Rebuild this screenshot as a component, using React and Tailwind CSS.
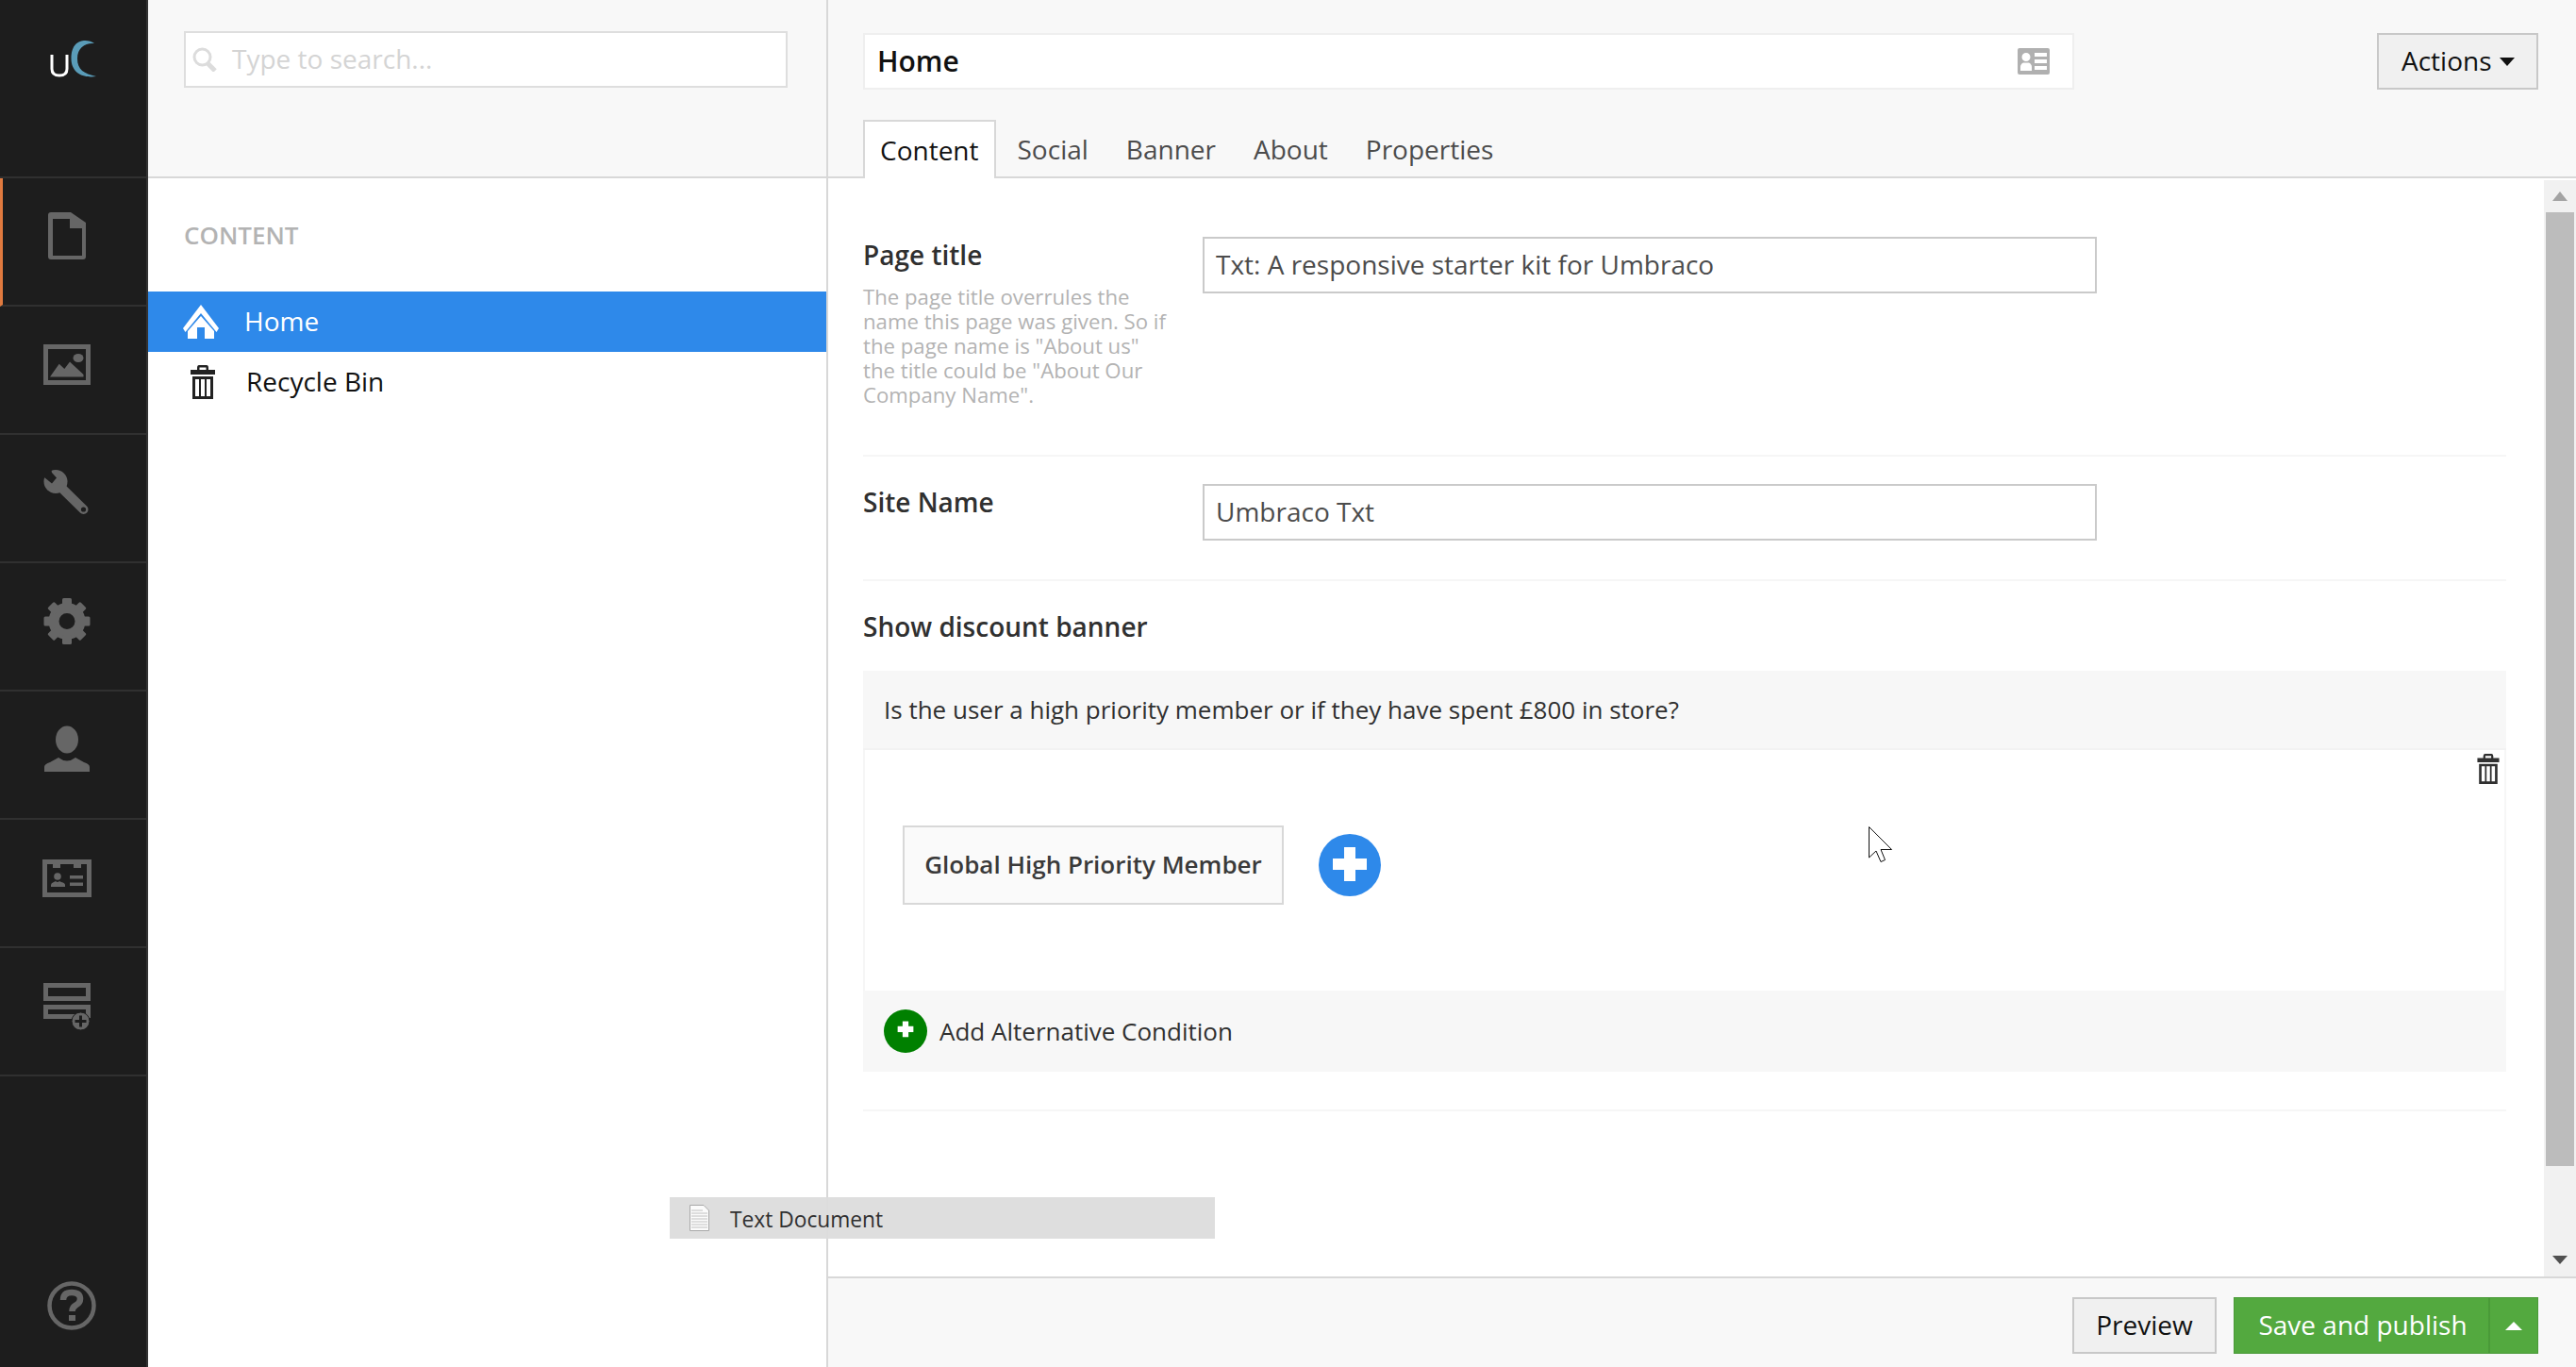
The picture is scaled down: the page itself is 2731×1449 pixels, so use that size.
import React from "react";

const navIconClass = "w-[52px] h-[52px] fill-[#666666]";

function DocIcon() {
  return (
    <svg viewBox="0 0 52 52" className={navIconClass}>
      <path
        fillRule="evenodd"
        d="M9 0H30L46 11V47Q46 50 43 50H9Q6 50 6 47V3Q6 0 9 0ZM11 7V46H42V17H29V7Z"
      />
    </svg>
  );
}

function ImageIcon() {
  return (
    <svg viewBox="0 0 52 52" className={navIconClass}>
      <path fillRule="evenodd" d="M1 4H51V47H1ZM6 9V42H46V9Z" />
      <path d="M8 38.5L17.7 24.7L23.3 30L29 22.4L43.5 36V38.5Z" />
      <ellipse cx="38" cy="18.5" rx="5.5" ry="4.5" />
    </svg>
  );
}

function WrenchIcon() {
  return (
    <svg viewBox="0 0 52 52" className={navIconClass}>
      <circle cx="14" cy="13.5" r="12.5" />
      <line x1="16" y1="16" x2="43.5" y2="43" stroke="#666666" strokeWidth="10" strokeLinecap="round" />
      <polygon points="-2,-1 9,-1 10,4 15,9.5 10,15.5 2,9 -2,9" fill="#1d1d1d" />
      <circle cx="43.5" cy="43" r="2.6" fill="#1d1d1d" />
    </svg>
  );
}

function GearIcon() {
  const angles = [0, 45, 90, 135, 180, 225, 270, 315];
  return (
    <svg viewBox="0 0 52 52" className={navIconClass}>
      <circle cx="26" cy="25.5" r="14" fill="none" stroke="#666666" strokeWidth="11" />
      {angles.map((a) => (
        <rect key={a} x="21" y="1" width="10" height="10" rx="1.5" transform={`rotate(${a} 26 25.5)`} />
      ))}
    </svg>
  );
}

function PersonIcon() {
  return (
    <svg viewBox="0 0 52 52" className={navIconClass}>
      <ellipse cx="26" cy="15" rx="12" ry="14.5" />
      <path d="M2 49V44Q2 41 8 39L17 34Q26 41 35 34L44 39Q50 41 50 44V49Z" />
    </svg>
  );
}

function CardIcon() {
  return (
    <svg viewBox="0 0 52 52" className={navIconClass}>
      <path
        fillRule="evenodd"
        d="M0 6H52V46H0ZM5 11V41H47V11H41V15H33V11H19V15H11V11Z"
      />
      <circle cx="16" cy="24" r="3.8" />
      <path d="M9 35V33Q9 31 12 30L14 29Q16 31 18 29L20 30Q24 31 24 33V35Z" />
      <rect x="29" y="23" width="14" height="3.5" />
      <rect x="29" y="30.5" width="14" height="3.5" />
    </svg>
  );
}

function GridAddIcon() {
  return (
    <svg viewBox="0 0 52 52" className={navIconClass}>
      <path fillRule="evenodd" d="M1 1H51V20H1ZM6 6V15H46V6Z" />
      <path fillRule="evenodd" d="M1 24H51V38H35V39H1ZM6 29V34H46V29Z" />
      <circle cx="40.5" cy="41.5" r="9.5" stroke="#1d1d1d" strokeWidth="1" />
      <path d="M39 35.5H42V40H46.5V43H42V47.5H39V43H34.5V40H39Z" fill="#1d1d1d" />
    </svg>
  );
}

function HelpIcon() {
  return (
    <svg viewBox="0 0 52 52" className="w-[52px] h-[52px]" fill="none" stroke="#666666">
      <circle cx="26" cy="26" r="23.5" strokeWidth="4.5" />
      <path d="M17 20Q17 12 26 12Q35 12 35 19Q35 23 30.5 25.5Q26.5 27.5 26.5 32" strokeWidth="6.5" />
      <rect x="23" y="36" width="7" height="6" fill="#666666" stroke="none" />
    </svg>
  );
}

function TrashIcon({ className }) {
  return (
    <svg viewBox="0 0 26 36" className={className}>
      <path
        fillRule="evenodd"
        d="M9 0H17Q19 0 19 3V5H26V10H0V5H7V3Q7 0 9 0ZM9.5 2.5V5H16.5V2.5Z"
      />
      <path
        fillRule="evenodd"
        d="M2 12H24V36H2ZM5 15V33H9V15ZM11 15V33H15V15ZM17 15V33H21V15Z"
      />
    </svg>
  );
}

function HomeIcon() {
  return (
    <svg viewBox="0 0 38 36" className="w-[38px] h-[36px] fill-white">
      <path d="M19 0L38 25L35.5 29L19 9L2.5 29L0 25Z" />
      <path fillRule="evenodd" d="M19 12L33 28V36H5V28ZM15 24V36H23V24Z" />
    </svg>
  );
}

function SearchIcon() {
  return (
    <svg viewBox="0 0 26 26" className="w-[26px] h-[26px]" fill="none" stroke="#dcdcdc">
      <circle cx="10.5" cy="10.5" r="8.5" strokeWidth="3" />
      <path d="M16 17L24 25" strokeWidth="5" />
    </svg>
  );
}

function PlusCircle({ size, plus, thick, bg, lift }) {
  const a = (66 - plus) / 2;
  const b = (66 - thick) / 2;
  return (
    <svg viewBox="0 0 66 66" className={size}>
      <circle cx="33" cy="33" r="33" fill={bg} />
      <rect x={a} y={b - lift} width={plus} height={thick} fill="#fff" />
      <rect x={b} y={a - lift} width={thick} height={plus} fill="#fff" />
    </svg>
  );
}

const navItems = [
  { id: "content", icon: <DocIcon />, active: true },
  { id: "media", icon: <ImageIcon /> },
  { id: "settings", icon: <WrenchIcon /> },
  { id: "developer", icon: <GearIcon /> },
  { id: "users", icon: <PersonIcon /> },
  { id: "members", icon: <CardIcon /> },
  { id: "forms", icon: <GridAddIcon /> },
];

const tabs = ["Content", "Social", "Banner", "About", "Properties"];

function Sidebar() {
  return (
    <div className="w-[157px] shrink-0 flex flex-col bg-[#1d1d1d] border-r-2 border-[#333333]">
      <div className="h-[189px] border-b-2 border-[#303030] pl-[53px] pt-[42px]">
        <svg viewBox="0 0 50 40" className="w-[50px] h-[40px]" fill="none">
          <path d="M2 16V31Q2 38 10 38Q18 38 18 31V16" stroke="#ffffff" strokeWidth="3" />
          <path d="M47 4C40 -1 22.5 -2 22.5 20C22.5 36 36 41 49 39C36 36 29 32 29 20C29 8 38 3 47 4Z" fill="#5a9cb8" />
        </svg>
      </div>
      {navItems.map((item) => (
        <div
          key={item.id}
          className={
            item.active
              ? "h-[136px] border-b-2 border-[#303030] border-l-[3px] border-l-[#e07a3f] pt-9 pl-[42px]"
              : "h-[136px] border-b-2 border-[#303030] pt-9 pl-[45px]"
          }
        >
          {item.icon}
        </div>
      ))}
      <div className="mt-auto pl-[50px] pb-[39px]">
        <HelpIcon />
      </div>
    </div>
  );
}

function TreePanel() {
  return (
    <div className="w-[721px] shrink-0 flex flex-col border-r-2 border-[#d8d8d8]">
      <div className="h-[189px] bg-[#f8f8f8] border-b-2 border-[#d8d8d8] pl-[38px] pt-[33px]">
        <div className="w-[640px] h-[60px] bg-white border-2 border-[#dedede] flex items-center pl-[7px]">
          <SearchIcon />
          <span className="ml-[16px] pb-[2px] text-[28px] text-[#d4d4d4]">Type to search...</span>
        </div>
      </div>
      <div className="pt-[41px] pl-[38px] text-[26px] leading-[38px] font-semibold text-[#b3b3b3]">
        CONTENT
      </div>
      <div className="mt-[41px] h-[64px] bg-[#2e89ea] flex items-center pl-[37px] text-white text-[28px]">
        <HomeIcon />
        <span className="ml-[27px] pb-[2px]">Home</span>
      </div>
      <div className="h-[64px] flex items-center pl-[45px] text-[#111111] text-[28px]">
        <TrashIcon className="w-[26px] h-[36px] fill-[#222222]" />
        <span className="ml-[33px] pb-[2px]">Recycle Bin</span>
      </div>
    </div>
  );
}

function Field({ value }) {
  return (
    <div className="w-[948px] h-[60px] border-2 border-[#cacaca] flex items-center pl-[12px] pb-[2px] text-[28px] text-[#4c4c4c]">
      {value}
    </div>
  );
}

function Editor() {
  return (
    <div className="flex-1 min-w-0 flex flex-col">
      <div className="h-[189px] bg-[#f8f8f8] border-b-2 border-[#d8d8d8] pl-[37px] pt-[35px]">
        <div className="flex">
          <div className="w-[1284px] h-[60px] bg-white border-2 border-[#efefef] flex items-center pl-[13px] pr-[24px]">
            <span className="pb-[2px] text-[30px] font-semibold text-[#111111]">Home</span>
            <svg viewBox="0 0 34 28" className="ml-auto w-[34px] h-[28px] fill-[#b0b0b0]">
              <path
                fillRule="evenodd"
                d="M2 0H32Q34 0 34 2V26Q34 28 32 28H2Q0 28 0 26V2Q0 0 2 0ZM9 5A4.5 4.5 0 0 0 9 14A4.5 4.5 0 0 0 9 5ZM3 24H15V20Q15 17 12 15.5H6Q3 17 3 20ZM18 5V9H31V5ZM18 12V16H31V12ZM18 19V23H31V19Z"
              />
            </svg>
          </div>
          <button className="ml-[321px] w-[171px] h-[60px] bg-[#f0f0f0] border-2 border-[#c8c8c8] flex items-center pl-[24px] pb-[2px] text-[28px] text-[#111111]">
            Actions
            <span className="ml-[8px] mt-[2px] border-x-[8px] border-x-transparent border-t-[9px] border-t-[#111111]"></span>
          </button>
        </div>
        <div className="flex mt-[32px] h-[62px]">
          {tabs.map((tab, i) => (
            <div
              key={tab}
              className={
                i === 0
                  ? "h-[62px] mr-[3px] bg-white border-2 border-b-0 border-[#d8d8d8] px-[16px] flex items-center text-[28px] text-[#111111]"
                  : "h-[62px] px-[20px] flex items-center text-[28px] text-[#4c4c4c]"
              }
            >
              {tab}
            </div>
          ))}
        </div>
      </div>

      <div className="flex-1 min-h-0 flex">
        <div className="flex-1 min-w-0 pl-[37px] pr-[40px] pt-[62px] bg-white">
          <div className="flex border-b-2 border-[#f6f6f6] pb-[50px]">
            <div className="w-[360px] pr-[32px]">
              <div className="text-[28px] leading-[38px] font-semibold text-[#303030]">Page title</div>
              <p className="mt-[13px] text-[22.2px] leading-[26px] text-[#b3b3b3]">
                The page title overrules the name this page was given. So if the page name is "About us" the title could
                be "About Our Company Name".
              </p>
            </div>
            <Field value="Txt: A responsive starter kit for Umbraco" />
          </div>

          <div className="flex border-b-2 border-[#f6f6f6] pt-[29px] pb-[41px]">
            <div className="w-[360px] text-[28px] leading-[38px] font-semibold text-[#303030]">Site Name</div>
            <Field value="Umbraco Txt" />
          </div>

          <div className="border-b-2 border-[#f6f6f6] pt-[29px] pb-[40px]">
            <div className="text-[28px] leading-[38px] font-semibold text-[#303030]">Show discount banner</div>
            <div className="mt-[28px]">
              <div className="h-[84px] bg-[#f7f7f7] border-b-2 border-[#f2f2f2] flex items-center pl-[22px] text-[26px] text-[#303030]">
                Is the user a high priority member or if they have spent £800 in store?
              </div>
              <div className="relative h-[255px] border-x-2 border-[#f6f6f6] pl-[40px] pt-[80px] flex items-start">
                <div className="w-[404px] h-[84px] bg-[#fafafa] border-2 border-[#d8d8d8] flex items-center justify-center pb-[2px] text-[26px] font-semibold text-[#3a3a3a]">
                  Global High Priority Member
                </div>
                <div className="ml-[37px] mt-[9px]">
                  <PlusCircle size="w-[66px] h-[66px]" plus={36} thick={12} bg="#2e89ea" lift={1} />
                </div>
                <TrashIcon className="absolute right-[5px] top-[4px] w-[24px] h-[32px] fill-[#303030]" />
              </div>
              <div className="h-[86px] bg-[#f7f7f7] flex items-center pl-[22px] text-[26px] text-[#303030]">
                <PlusCircle size="w-[46px] h-[46px]" plus={24} thick={9} bg="#008000" lift={3} />
                <span className="ml-[13px]">Add Alternative Condition</span>
              </div>
            </div>
          </div>
        </div>

        <div className="w-[34px] shrink-0 pt-[2px] flex flex-col">
          <div className="h-[34px] bg-[#f1f1f1] flex items-center justify-center">
            <span className="border-x-[8px] border-x-transparent border-b-[10px] border-b-[#a3a3a3]"></span>
          </div>
          <div className="h-[1011px] bg-[#f1f1f1] px-[2px]">
            <div className="h-full bg-[#bcbcbc]"></div>
          </div>
          <div className="flex-1 bg-[#f1f1f1] flex items-end justify-center pb-[13px]">
            <span className="border-x-[8px] border-x-transparent border-t-[9px] border-t-[#505050]"></span>
          </div>
        </div>
      </div>

      <div className="h-[96px] bg-[#f8f8f8] border-t-2 border-[#d8d8d8] flex justify-end items-start pt-[20px] pr-[40px]">
        <button className="w-[153px] h-[60px] bg-[#f0f0f0] border-2 border-[#c8c8c8] pb-[2px] text-[28px] text-[#111111]">
          Preview
        </button>
        <div className="ml-[18px] h-[60px] flex bg-[#53a93f] border border-[#4a9a38] text-white text-[28px]">
          <button className="w-[271px] pl-[3px] pb-[2px] border-r-2 border-[#4a9a38]">Save and publish</button>
          <div className="w-[50px] flex items-center justify-center">
            <span className="border-x-[9px] border-x-transparent border-b-[9px] border-b-white"></span>
          </div>
        </div>
      </div>
    </div>
  );
}

export default function App() {
  return (
    <div className="relative h-screen w-full overflow-hidden flex bg-white font-['Open_Sans',sans-serif]">
      <Sidebar />
      <TreePanel />
      <Editor />

      {/* drag ghost and pointer, both float over the page */}
      <div className="absolute left-[710px] top-[1269px] w-[578px] h-[44px] bg-[#dcdcdc]/95 flex items-center pl-[21px] text-[22.75px] text-[#303030]">
        <svg viewBox="0 0 21 28" className="w-[21px] h-[28px]">
          <path d="M0.5 0.5H15L20.5 6V27.5H0.5Z" fill="#fbfbfb" stroke="#a8a8a8" />
          <path d="M2 6H14M2 9H19M2 12H19M2 15H19M2 18H19M2 21H19M2 24H19" stroke="#c0c0c0" />
        </svg>
        <span className="ml-[22px] pt-[4px]">Text Document</span>
      </div>
      <svg viewBox="0 0 26 38" className="absolute left-[1981px] top-[876px] w-[26px] h-[38px]">
        <path d="M0.5 0.5V33L8 26L13 37.5L17.5 35.5L13 24.5H24.5Z" fill="#ffffff" stroke="#111111" />
      </svg>
    </div>
  );
}
